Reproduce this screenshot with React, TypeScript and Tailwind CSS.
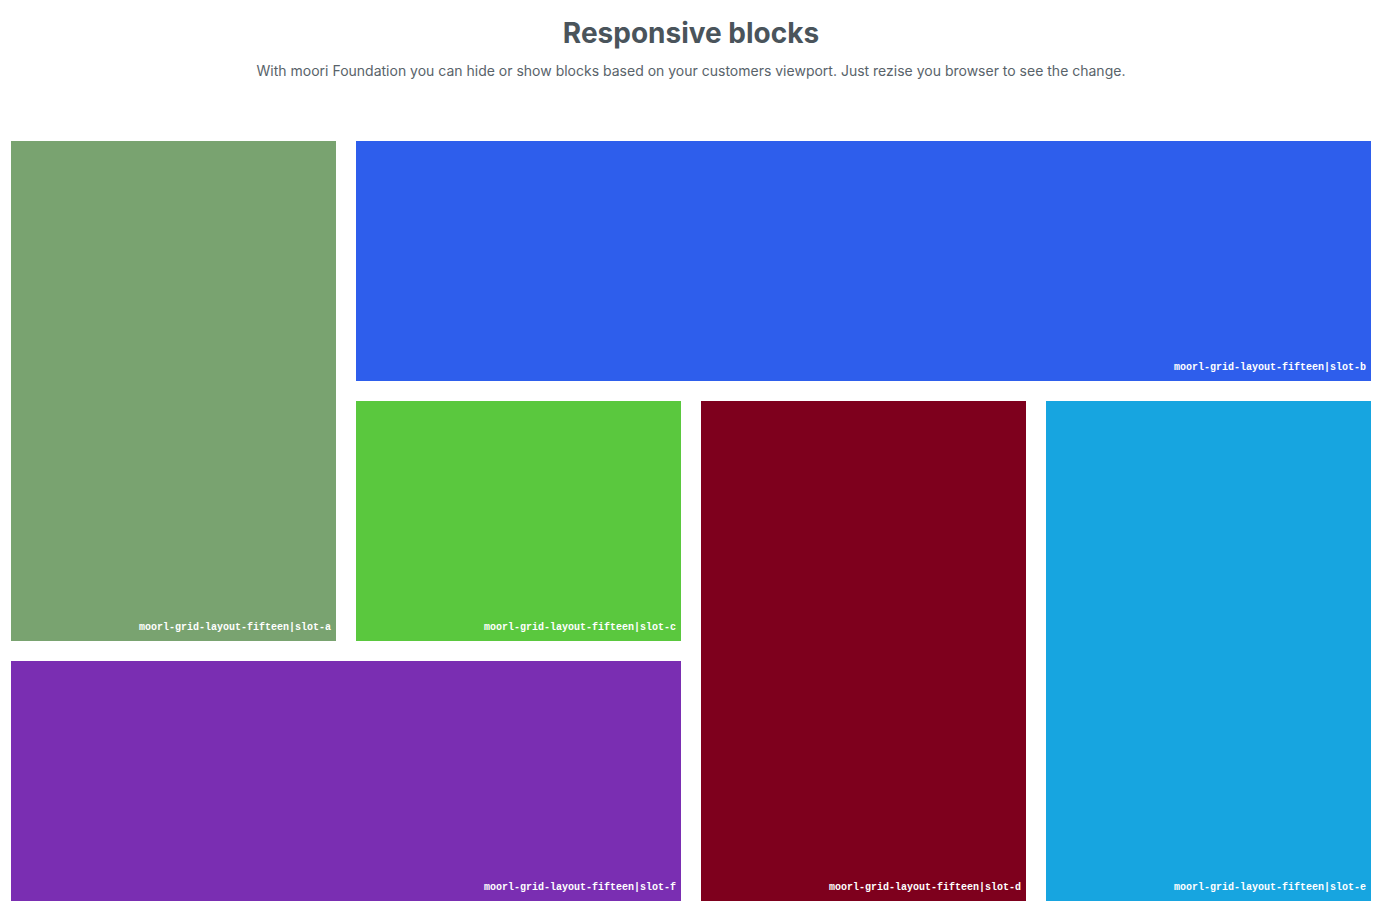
const slots = [
  { id: "a", area: "col-start-1 row-start-1 row-span-2 bg-[#79a370]" },
  { id: "b", area: "col-start-2 col-span-3 row-start-1 bg-[#2e5eec]" },
  { id: "c", area: "col-start-2 row-start-2 bg-[#5ac83e]" },
  { id: "d", area: "col-start-3 row-start-2 row-span-2 bg-[#7e001d]" },
  { id: "e", area: "col-start-4 row-start-2 row-span-2 bg-[#17a5e0]" },
  { id: "f", area: "col-start-1 col-span-2 row-start-3 bg-[#7a2eb2]" },
];

export default function App() {
  return (
    <main className="bg-white pt-4 pr-[17px] pb-4 pl-[11px] font-['Inter',sans-serif] text-[#4a545b]">
      <header className="mb-[60px] text-center">
        <h1 className="text-[28px] leading-[34px] font-bold">Responsive blocks</h1>
        <p className="mt-[10px] text-[14px] leading-[21px] text-[#59636a]">
          With moori Foundation you can hide or show blocks based on your customers viewport. Just rezise you browser to see the change.
        </p>
      </header>
      <section className="grid auto-rows-[240px] grid-cols-4 gap-5">
        {slots.map((slot) => (
          <div key={slot.id} className={`flex items-end justify-end p-[5px] ${slot.area}`}>
            <span className="font-['Liberation_Mono',monospace] text-[10px] leading-[16px] font-bold text-white">
              moorl-grid-layout-fifteen|slot-{slot.id}
            </span>
          </div>
        ))}
      </section>
    </main>
  );
}
